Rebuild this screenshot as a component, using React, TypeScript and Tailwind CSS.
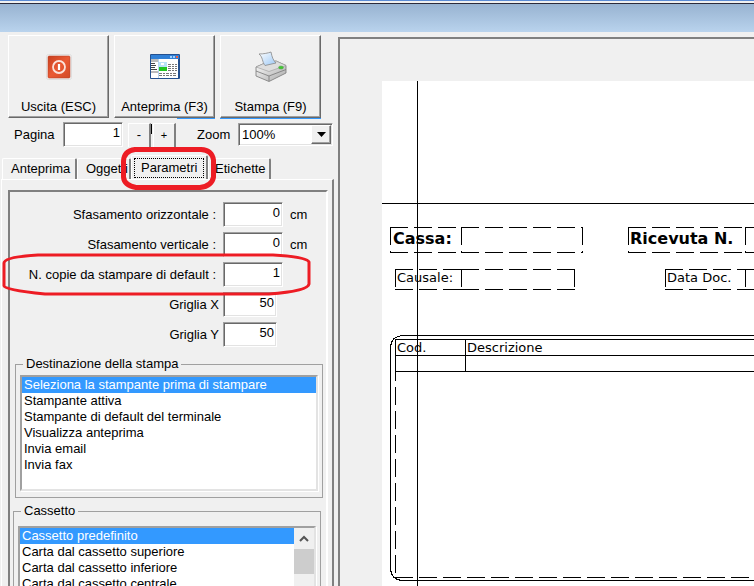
import type { ReactNode } from "react";

const sunken = "border-2 border-t-[#a0a0a0] border-l-[#a0a0a0] border-b-[#e3e3e3] border-r-[#e3e3e3] shadow-[inset_1px_1px_0_#696969,1px_1px_0_#fff]";
const field = "border border-t-[#a0a0a0] border-l-[#a0a0a0] border-b-white border-r-white bg-white shadow-[inset_1px_1px_0_#696969,inset_-1px_-1px_0_#e3e3e3] text-right outline-none";
const raised = "border border-t-white border-l-white border-b-[#696969] border-r-[#696969] shadow-[inset_-1px_-1px_0_#a0a0a0]";
const stepper = "border-t border-l border-r-2 border-t-white border-l-white border-r-[#808080]";

function PowerIcon() {
  return (
    <svg width="26" height="26" viewBox="0 0 26 26">
      <defs>
        <linearGradient id="power" x1="0" y1="0" x2="1" y2="1">
          <stop offset="0" stopColor="#c8401f" />
          <stop offset="0.5" stopColor="#ea5a34" />
          <stop offset="1" stopColor="#d14a26" />
        </linearGradient>
      </defs>
      <rect x="0.5" y="0.5" width="25" height="25" rx="2" fill="#f6f6f6" stroke="#dedede" />
      <rect x="2" y="2" width="22" height="22" rx="1" fill="url(#power)" stroke="#b8452a" strokeWidth="0.6" />
      <circle cx="13" cy="13" r="6" fill="none" stroke="#fbe3dc" strokeWidth="1.8" />
      <path d="M13 10v6" stroke="#fff" strokeWidth="2.2" />
    </svg>
  );
}

function PreviewIcon() {
  return (
    <svg width="30" height="26" viewBox="0 0 30 26">
      <rect width="30" height="25" rx="1" fill="#24508f" />
      <rect x="1" y="1" width="28" height="4" fill="#2f7fd6" />
      <path d="M20 2h2v2h-2zM23 2h2v2h-2z" fill="#9fd0ff" />
      <path d="M26 2h2v2h-2z" fill="#f06040" />
      <rect x="1" y="5" width="27" height="19" fill="#fff" />
      <path d="M1 5h7v3H1zM1 17h7v2H1z" fill="#bbb" />
      <path d="M1 9.500h4M1 11.500h5M1 13.500h4M1 15.500h6" stroke="#444" />
      <path d="M8.500 5v19" stroke="#b5d3ef" />
      <rect x="9" y="8" width="8" height="9" fill="#b9e2fa" />
      <path d="M11 9h3v2h-3z" fill="#fff" />
      <path d="M9 13h8v4H9z" fill="#22c522" />
      <path d="M18 10.500h9M18 12.500h9M18 14.500h9M18 16.500h9M9 19.500h18M9 21.500h18" stroke="#777" strokeDasharray="3 1 2 1" />
    </svg>
  );
}

function PrinterIcon() {
  return (
    <svg width="32" height="32" viewBox="0 0 32 32">
      <defs>
        <linearGradient id="sheet" x1="0" y1="0" x2="1" y2="1">
          <stop offset="0" stopColor="#ffffff" />
          <stop offset="1" stopColor="#9cc8f5" />
        </linearGradient>
        <linearGradient id="body" x1="0" y1="0" x2="1" y2="1">
          <stop offset="0" stopColor="#ffffff" />
          <stop offset="1" stopColor="#a8a8a8" />
        </linearGradient>
      </defs>
      <path d="M1 16L10 12L21 10L31 14.500V22L14 30.500L1 25Z" fill="url(#body)" stroke="#777" strokeWidth="0.8" />
      <path d="M1 16L14 20.500L31 14.500L21 10L10 12Z" fill="#dedede" stroke="#999" strokeWidth="0.6" />
      <path d="M1 20L14 25L31 18.500M14 25V30" fill="none" stroke="#777" strokeWidth="0.8" />
      <path d="M4 3C9 3 13 2 16 1C17 6 18 9 21 12L10 14.500C7 11 8 6 4 3Z" fill="url(#sheet)" stroke="#888" strokeWidth="0.8" />
      <ellipse cx="26" cy="16.500" rx="2.500" ry="1.600" fill="#3fc930" stroke="#5a9a50" strokeWidth="0.5" />
    </svg>
  );
}

function ToolButton({ label, icon }: { label: string; icon: ReactNode }) {
  return (
    <button className={`flex h-[83px] w-[101px] flex-col items-center justify-between pb-[2px] ${raised}`}>
      <span className="flex h-[62px] items-center justify-center">{icon}</span>
      <span className="leading-4">{label}</span>
    </button>
  );
}

const rows = [
  { id: "offx", label: "Sfasamento orizzontale :", value: "0", unit: "cm", wide: true },
  { id: "offy", label: "Sfasamento verticale :", value: "0", unit: "cm", wide: true },
  { id: "copies", label: "N. copie da stampare di default :", value: "1", unit: "", wide: true },
  { id: "gridx", label: "Griglia X", value: "50", unit: "", wide: false },
  { id: "gridy", label: "Griglia Y", value: "50", unit: "", wide: false },
];

const destinations = ["Seleziona la stampante prima di stampare", "Stampante attiva", "Stampante di default del terminale", "Visualizza anteprima", "Invia email", "Invia fax"];
const trays = ["Cassetto predefinito", "Carta dal cassetto superiore", "Carta dal cassetto inferiore", "Carta dal cassetto centrale"];

function ListBox({ label, items, size, className }: { label: string; items: string[]; size: number; className: string }) {
  return (
    <select
      aria-label={label}
      size={size}
      defaultValue={items[0]}
      className={`block min-w-0 flex-1 appearance-none overflow-hidden rounded-none border-0 bg-white p-0 text-[13px] outline-none ${className}`}
    >
      {items.map((item) => (
        <option key={item} value={item} className="h-4 min-h-4 px-[2px] py-0 leading-4 text-black checked:bg-[#3399ff] checked:bg-linear-to-r checked:from-[#3399ff] checked:to-[#3399ff] checked:text-white">
          {item}
        </option>
      ))}
    </select>
  );
}

function Group({ title, className, children }: { title: string; className: string; children: ReactNode }) {
  return (
    <fieldset className={`min-w-0 border border-[#a0a0a0] ${className}`}>
      <legend className="ml-[3px] px-[3px] leading-4">{title}</legend>
      {children}
    </fieldset>
  );
}

function Tab({ label, className, selected = false }: { label: string; className: string; selected?: boolean }) {
  return (
    <button
      role="tab"
      aria-selected={selected}
      className={`shrink-0 rounded-t-[2px] border-t border-l border-r-2 border-t-white border-l-white border-r-[#808080] text-left whitespace-nowrap ${selected ? "h-6 p-[2px]" : "h-[21px]"} ${className}`}
    >
      {selected ? <span className="block border border-dotted border-black px-[6px] leading-[18px]">{label}</span> : label}
    </button>
  );
}

function Sidebar() {
  return (
    <aside className="w-[338px] shrink-0 pt-[3px]">
      <div className="flex gap-[5px] pl-2">
        <ToolButton label="Uscita (ESC)" icon={<PowerIcon />} />
        <ToolButton label="Anteprima (F3)" icon={<PreviewIcon />} />
        <ToolButton label="Stampa (F9)" icon={<PrinterIcon />} />
      </div>
      <div className="flex h-px gap-[5px] pl-[177px]">
        <div className="w-[38px] bg-[#3399ff]" />
        <div className="w-[101px] bg-[#3399ff]" />
      </div>

      <div className="flex h-7 items-center pt-[3px] pl-[14px]">
        <label htmlFor="page" className="w-[49px]">Pagina</label>
        <input id="page" defaultValue="1" className={`h-[25px] w-[60px] pr-[2px] pb-1 ${field}`} />
        <button className={`ml-[5px] h-6 w-[23px] ${stepper}`}>-</button>
        <span className="mb-3 h-[10px] w-px bg-black" />
        <button className={`ml-px h-6 w-[23px] text-[11px] ${stepper}`}>+</button>
        <label htmlFor="zoom" className="ml-[21px] w-[41px]">Zoom</label>
        <div className={`flex h-[23px] w-[95px] p-px ${field}`}>
          <select id="zoom" defaultValue="100%" className="min-w-0 flex-1 appearance-none bg-white pl-[2px] text-left outline-none">
            <option>100%</option>
          </select>
          <span className={`flex w-5 items-center justify-center bg-[#f0f0f0] ${raised}`}>
            <svg width="9" height="5" viewBox="0 0 9 5"><path d="M0 0h9L4.500 5z" /></svg>
          </span>
        </div>
      </div>

      <div className="relative mt-2">
        <div role="tablist" className="flex items-end pl-[2px]">
          <Tab label="Anteprima" className="w-[75px] pl-2" />
          <Tab label="Oggetti" className="w-[54px] border-r-0 pl-2" />
          <Tab label="Parametri" className="w-[77px]" selected />
          <Tab label="Etichette" className="w-[63px] pl-[6px]" />
        </div>
        <svg className="pointer-events-none absolute -top-[9px] left-[121px]" width="97" height="46" viewBox="0 0 97 46">
          <path d="M14 3.500H80Q91 4 92.500 14V31Q91 40 79 41.500H15Q3 39 2.500 31V15Q3 5 14 3.500Z" fill="none" stroke="#ed1c24" strokeWidth="5" />
        </svg>
      </div>

      <div className="mr-1 ml-px border-t border-r-2 border-l border-t-white border-r-[#808080] border-l-white pt-[10px] pr-1 pl-[6px]">
        <div className="border-2 border-b-0 border-t-[#808080] border-r-white border-l-[#808080] pb-10">
          <div className="relative flex flex-col gap-[5px] pt-[10px]">
            {rows.map((row) => (
              <div key={row.id} className="flex h-[25px] items-center">
                <label htmlFor={row.id} className={`w-[213px] text-right ${row.wide ? "pr-[7px]" : "pr-1"}`}>{row.label}</label>
                <input id={row.id} defaultValue={row.value} className={`h-[25px] pr-[2px] pb-1 ${row.wide ? "w-[60px]" : "w-[54px]"} ${field}`} />
                {row.unit && <span className="ml-[7px]">{row.unit}</span>}
              </div>
            ))}
            <svg className="pointer-events-none absolute top-[60px] -left-[9px]" width="312" height="46" viewBox="0 0 312 46">
              <path d="M37 3H272Q306 5 308 10V32Q307 39 268 42H44Q3 38 3 34V11Q3 5 37 3Z" fill="none" stroke="#ed1c24" strokeWidth="3" />
            </svg>
          </div>

          <Group title="Destinazione della stampa" className="mt-[9px] mr-[3px] ml-[5px] px-1 pb-[6px]">
            <div className={`mt-[3px] flex h-[116px] bg-white ${sunken}`}>
              <ListBox label="Destinazione della stampa" items={destinations} size={7} className="h-28" />
            </div>
          </Group>
          <Group title="Cassetto" className="mt-[5px] mr-[5px] ml-[3px] px-1 pb-[6px]">
            <div className={`mt-[7px] flex h-[116px] bg-white ${sunken}`}>
              <ListBox label="Cassetto" items={trays} size={6} className="h-28" />
              <div className="w-5 bg-[#f0f0f0]">
                <svg className="mt-[6px] ml-[5px]" width="10" height="9" viewBox="0 0 10 9"><path d="M1 7L5 3L9 7" fill="none" stroke="#555" strokeWidth="2" /></svg>
                <div className="mt-[6px] h-[25px] bg-[#cdcdcd]" />
              </div>
            </div>
          </Group>
        </div>
      </div>
    </aside>
  );
}

const dash = "18 6";

function Report() {
  return (
    <section aria-label="Anteprima documento" className="relative mt-[42px] ml-[42px] min-w-0 flex-1 overflow-hidden bg-white font-['DejaVu_Sans',sans-serif] leading-4">
      <svg className="absolute top-0 left-0 h-full w-full" fill="none" stroke="#000" shapeRendering="crispEdges">
        <path d="M35.500 0V1000M0 122.500H2000" />
        <path d="M2000 254.500H22Q8.500 254.500 8.500 268V486Q8.500 499.500 22 499.500H2000" />
        <path d="M2000 258.500H13.500V290.500H2000M13.500 274.500H2000M83.500 258.500V290.500" />
        <path d="M13.500 282V496" strokeDasharray={dash} />
        <path d="M13 496.500H2000" strokeDasharray={dash} />
        <g strokeDasharray={dash}>
          <path d="M8.500 146V172M79.500 146V172M200.500 146V172M8 146.500H79M8 171.500H79M79 146.500H201M79 171.500H201" />
          <path d="M13.500 188V209M79.500 188V209M192.500 188V209M13 188.500H79M13 208.500H79M79 188.500H193M79 208.500H193" />
          <path d="M246.500 146V172M363.500 146V172M246 146.500H363M246 171.500H363M363 146.500H2000M363 171.500H2000" />
          <path d="M283.500 188V209M363.500 188V209M283 188.500H363M283 208.500H363M363 188.500H2000M363 208.500H2000" />
        </g>
      </svg>
      <span className="absolute top-[150px] left-[11px] text-[16px] font-bold">Cassa:</span>
      <span className="absolute top-[150px] left-[248px] text-[16px] font-bold whitespace-nowrap">Ricevuta N.</span>
      <span className="absolute top-[189px] left-[15px] text-[13px]">Causale:</span>
      <span className="absolute top-[189px] left-[285px] text-[13px] whitespace-nowrap">Data Doc.</span>
      <span className="absolute top-[259px] left-[15px] text-[13px]">Cod.</span>
      <span className="absolute top-[259px] left-[85px] text-[13px]">Descrizione</span>
    </section>
  );
}

export default function App() {
  return (
    <div className="flex h-screen flex-col overflow-hidden bg-[#f0f0f0] font-['Liberation_Sans',Arial,sans-serif] text-[13px] leading-4 text-black">
      <header className="h-8 shrink-0 border-t border-[#5b8bd4] pt-[2px]">
        <div className="h-[29px] border-t border-[#2b2b3b] bg-linear-to-b from-[#98b3d1] to-[#b9d3ed]" />
      </header>
      <div className="flex min-h-0 flex-1">
        <Sidebar />
        <main className="mt-[5px] flex min-w-0 flex-1 border-t-2 border-l-2 border-[#808080]">
          <Report />
        </main>
      </div>
    </div>
  );
}
